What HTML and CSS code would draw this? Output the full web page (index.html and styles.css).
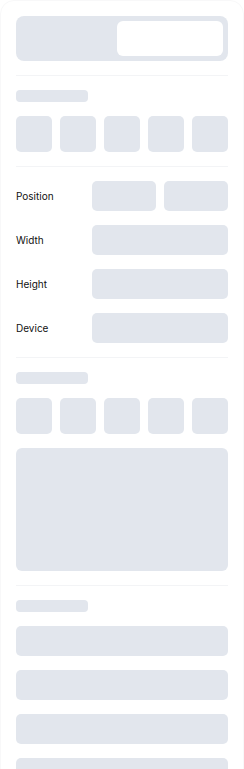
FILE: index.html
```html
<!DOCTYPE html>
<html>
<head>
    <link rel="stylesheet" href="styles.css">
</head>
<body>
    <div class="panel">
        <!-- tab switch -->
        <div class="tabs">
            <div class="tab_active"></div>
        </div>

        <div class="divider"></div>

        <div class="section">
            <div class="sk_label"></div>
            <div class="tiles">
                <div class="tile"></div>
                <div class="tile"></div>
                <div class="tile"></div>
                <div class="tile"></div>
                <div class="tile"></div>
            </div>
        </div>

        <div class="divider"></div>

        <!-- frame props -->
        <div class="section">
            <div class="prop_row">
                <span class="prop_name">Position</span>
                <div class="prop_fields">
                    <div class="field"></div>
                    <div class="field"></div>
                </div>
            </div>
            <div class="prop_row">
                <span class="prop_name">Width</span>
                <div class="prop_fields">
                    <div class="field"></div>
                </div>
            </div>
            <div class="prop_row">
                <span class="prop_name">Height</span>
                <div class="prop_fields">
                    <div class="field"></div>
                </div>
            </div>
            <div class="prop_row">
                <span class="prop_name">Device</span>
                <div class="prop_fields">
                    <div class="field"></div>
                </div>
            </div>
        </div>

        <div class="divider"></div>

        <div class="section">
            <div class="sk_label"></div>
            <div class="tiles">
                <div class="tile"></div>
                <div class="tile"></div>
                <div class="tile"></div>
                <div class="tile"></div>
                <div class="tile"></div>
            </div>
            <div class="preview"></div>
        </div>

        <div class="divider"></div>

        <div class="section">
            <div class="sk_label"></div>
            <div class="field"></div>
            <div class="field"></div>
            <div class="field"></div>
            <div class="field"></div>
        </div>
    </div>
</body>
</html>
```

FILE: styles.css
```css
body {
    margin: 0;
    background-color: #fff;
    font-family: 'Inter', 'Liberation Sans', sans-serif;
    color: #111827;
}

/* outer card, border barely there */
.panel {
    box-sizing: border-box;
    width: 244px;
    min-height: 800px;
    padding: 16px;
    border: 1px solid #f8f8f9;
    border-radius: 14px;
    margin: 0;
    display: flex;
    flex-direction: column;
    gap: 14px;
}

.tabs {
    margin: -1px -1px 0 -1px;
    height: 45px;
    box-sizing: border-box;
    padding: 5px;
    background-color: #e2e6ed;
    border-radius: 8px;
    display: flex;
    justify-content: flex-end;
}

.tab_active {
    width: 106px;
    background-color: #fff;
    border-radius: 6px;
}

.divider {
    height: 1px;
    margin: 0 -1px;
    background-color: #f3f4f6;
}

.section {
    margin: 0 -1px;
    display: flex;
    flex-direction: column;
    gap: 14px;
}

.sk_label {
    width: 72px;
    height: 12px;
    border-radius: 4px;
    background-color: #e2e6ed;
}

.tiles {
    display: flex;
    gap: 8px;
}

.tile {
    width: 36px;
    height: 36px;
    border-radius: 5px;
    background-color: #e2e6ed;
}

.preview {
    height: 123px;
    border-radius: 6px;
    background-color: #e2e6ed;
}

.prop_row {
    display: flex;
    align-items: center;
}

.prop_name {
    width: 76px;
    font-size: 10px;
    color: #111;
}

.prop_fields {
    flex: 1;
    display: flex;
    gap: 8px;
}

.prop_fields .field {
    flex: 1;
}

.field {
    height: 30px;
    border-radius: 5px;
    background-color: #e2e6ed;
}
```
